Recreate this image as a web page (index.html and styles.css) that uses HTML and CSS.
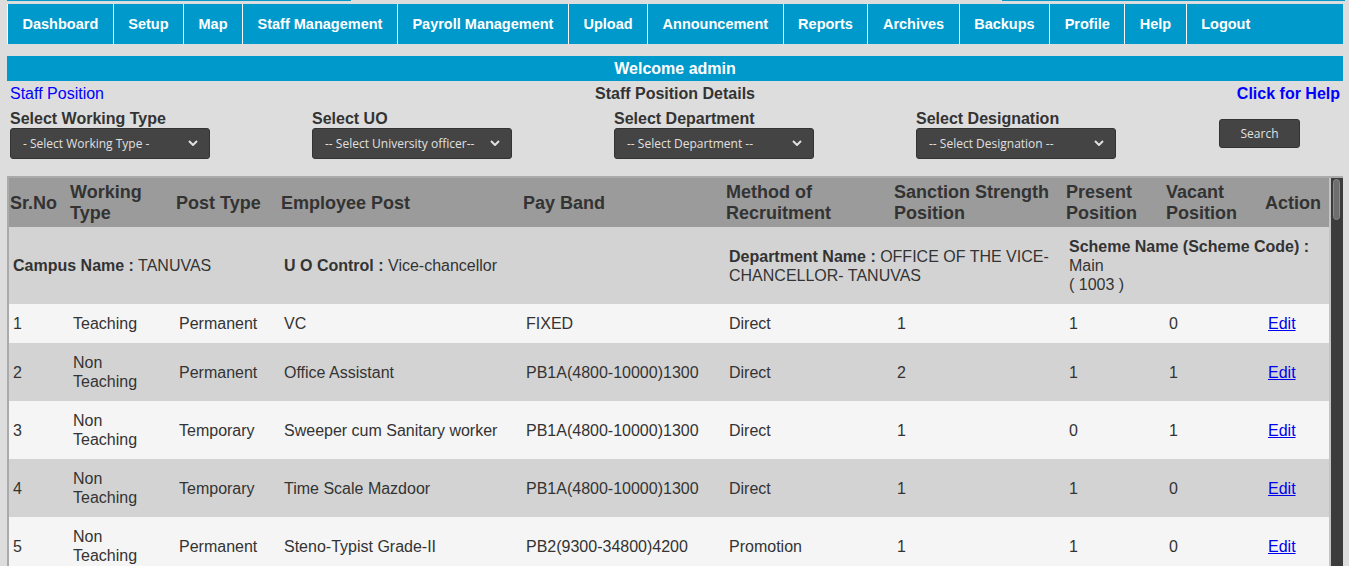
FILE: index.html
```html
<!DOCTYPE html>
<html lang="en">
<head>
<meta charset="utf-8">
<title>Staff Position Details</title>
<link rel="stylesheet" href="styles.css">
</head>
<body>
<div class="page">
  <div class="top-strip"></div>
  <ul class="nav">
    <li class="nav-item"><a href="#">Dashboard</a></li>
    <li class="nav-item"><a href="#">Setup</a></li>
    <li class="nav-item"><a href="#">Map</a></li>
    <li class="nav-item"><a href="#">Staff Management</a></li>
    <li class="nav-item"><a href="#">Payroll Management</a></li>
    <li class="nav-item"><a href="#">Upload</a></li>
    <li class="nav-item"><a href="#">Announcement</a></li>
    <li class="nav-item"><a href="#">Reports</a></li>
    <li class="nav-item"><a href="#">Archives</a></li>
    <li class="nav-item"><a href="#">Backups</a></li>
    <li class="nav-item"><a href="#">Profile</a></li>
    <li class="nav-item"><a href="#">Help</a></li>
    <li class="nav-item"><a href="#">Logout</a></li>
  </ul>

  <div class="welcome">Welcome admin</div>

  <div class="title-row">
    <a class="crumb" href="#">Staff Position</a>
    <div class="page-title">Staff Position Details</div>
    <a class="help-link" href="#">Click for Help</a>
  </div>

  <div class="filters">
    <div class="filter">
      <div class="filter-label">Select Working Type</div>
      <div class="select-wrap">
        <select class="select"><option>- Select Working Type -</option></select>
        <svg class="chevron" viewBox="0 0 10 6" width="10" height="6"><path d="M1 1 L5 5 L9 1" fill="none" stroke="#e0e0e0" stroke-width="2"/></svg>
      </div>
    </div>
    <div class="filter">
      <div class="filter-label">Select UO</div>
      <div class="select-wrap">
        <select class="select"><option>-- Select University officer--</option></select>
        <svg class="chevron" viewBox="0 0 10 6" width="10" height="6"><path d="M1 1 L5 5 L9 1" fill="none" stroke="#e0e0e0" stroke-width="2"/></svg>
      </div>
    </div>
    <div class="filter">
      <div class="filter-label">Select Department</div>
      <div class="select-wrap">
        <select class="select"><option>-- Select Department --</option></select>
        <svg class="chevron" viewBox="0 0 10 6" width="10" height="6"><path d="M1 1 L5 5 L9 1" fill="none" stroke="#e0e0e0" stroke-width="2"/></svg>
      </div>
    </div>
    <div class="filter">
      <div class="filter-label">Select Designation</div>
      <div class="select-wrap">
        <select class="select"><option>-- Select Designation --</option></select>
        <svg class="chevron" viewBox="0 0 10 6" width="10" height="6"><path d="M1 1 L5 5 L9 1" fill="none" stroke="#e0e0e0" stroke-width="2"/></svg>
      </div>
    </div>
    <div class="filter-action">
      <button class="search-btn" type="button">Search</button>
    </div>
  </div>

  <div class="table-wrap">
    <div class="table-scroll">
      <table class="staff-table">
        <colgroup>
          <col class="c-sr"><col class="c-wt"><col class="c-pt"><col class="c-ep"><col class="c-pb">
          <col class="c-mr"><col class="c-ss"><col class="c-pp"><col class="c-vp"><col class="c-ac">
        </colgroup>
        <thead>
          <tr>
            <th>Sr.No</th>
            <th>Working Type</th>
            <th>Post Type</th>
            <th>Employee Post</th>
            <th>Pay Band</th>
            <th>Method of Recruitment</th>
            <th>Sanction Strength Position</th>
            <th>Present Position</th>
            <th>Vacant Position</th>
            <th>Action</th>
          </tr>
        </thead>
        <tbody>
          <tr class="group-row">
            <td colspan="3"><b>Campus Name :</b> TANUVAS</td>
            <td colspan="2"><b>U O Control :</b> Vice-chancellor</td>
            <td colspan="2"><b>Department Name :</b> OFFICE OF THE VICE-CHANCELLOR- TANUVAS</td>
            <td colspan="3"><b>Scheme Name (Scheme Code) :</b><br>Main<br>( 1003 )</td>
          </tr>
          <tr class="row-light">
            <td>1</td><td>Teaching</td><td>Permanent</td><td>VC</td><td>FIXED</td><td>Direct</td><td>1</td><td>1</td><td>0</td><td><a class="edit" href="#">Edit</a></td>
          </tr>
          <tr class="row-dark">
            <td>2</td><td>Non Teaching</td><td>Permanent</td><td>Office Assistant</td><td>PB1A(4800-10000)1300</td><td>Direct</td><td>2</td><td>1</td><td>1</td><td><a class="edit" href="#">Edit</a></td>
          </tr>
          <tr class="row-light">
            <td>3</td><td>Non Teaching</td><td>Temporary</td><td>Sweeper cum Sanitary worker</td><td>PB1A(4800-10000)1300</td><td>Direct</td><td>1</td><td>0</td><td>1</td><td><a class="edit" href="#">Edit</a></td>
          </tr>
          <tr class="row-dark">
            <td>4</td><td>Non Teaching</td><td>Temporary</td><td>Time Scale Mazdoor</td><td>PB1A(4800-10000)1300</td><td>Direct</td><td>1</td><td>1</td><td>0</td><td><a class="edit" href="#">Edit</a></td>
          </tr>
          <tr class="row-light">
            <td>5</td><td>Non Teaching</td><td>Permanent</td><td>Steno-Typist Grade-II</td><td>PB2(9300-34800)4200</td><td>Promotion</td><td>1</td><td>1</td><td>0</td><td><a class="edit" href="#">Edit</a></td>
          </tr>
          <tr class="row-dark">
            <td>6</td><td>Non Teaching</td><td>Permanent</td><td>Driver</td><td>PB1A(5200-20200)2400</td><td>Direct</td><td>1</td><td>1</td><td>0</td><td><a class="edit" href="#">Edit</a></td>
          </tr>
          <tr class="row-light">
            <td>7</td><td>Non Teaching</td><td>Permanent</td><td>Personal Assistant</td><td>PB2(9300-34800)4600</td><td>Promotion</td><td>1</td><td>1</td><td>0</td><td><a class="edit" href="#">Edit</a></td>
          </tr>
        </tbody>
      </table>
    </div>
    <div class="scrollbar"><div class="scrollbar-thumb"></div></div>
  </div>
</div>
</body>
</html>
```
FILE: styles.css
```css
* { box-sizing: border-box; }

html, body {
  margin: 0;
  padding: 0;
}

body {
  background: #dddddd;
  font-family: "Liberation Sans", Arial, sans-serif;
  color: #333333;
  overflow: hidden;
}

.page {
  width: 1336px;
  margin-left: 7px;
}

.top-strip {
  height: 1px;
  width: 1338px;
  background: linear-gradient(to right, #0099cc 0, #0099cc 344px, transparent 344px, transparent 995px, #0099cc 995px);
}

.nav {
  list-style: none;
  margin: 3px 0 0 0;
  padding: 0;
  display: flex;
  height: 40px;
  background: #0099cc;
  border-left: 1px solid #ffffff;
}

.nav-item a {
  display: block;
  padding: 0 14.5px;
  line-height: 40px;
  font-size: 14.5px;
  font-weight: bold;
  color: #ffffff;
  text-decoration: none;
  border-right: 1px solid #ffffff;
}

.nav-item:last-child a {
  border-right: none;
}

.welcome {
  margin-top: 12px;
  height: 25px;
  line-height: 25px;
  background: #0099cc;
  color: #ffffff;
  font-size: 16px;
  font-weight: bold;
  text-align: center;
}

.title-row {
  margin-top: 3px;
  padding: 0 3px;
  display: grid;
  grid-template-columns: 1fr auto 1fr;
  font-size: 16px;
  line-height: 19px;
}

.crumb {
  color: #0000ff;
  text-decoration: none;
}

.page-title {
  font-weight: bold;
  color: #333333;
}

.help-link {
  justify-self: end;
  color: #0000ff;
  font-weight: bold;
  text-decoration: none;
}

.filters {
  margin-top: 7px;
  padding-left: 3px;
  display: grid;
  grid-template-columns: 302px 302px 302px 302px auto;
  align-items: start;
}

.filter-label {
  font-size: 16px;
  line-height: 18px;
  font-weight: bold;
  color: #333333;
}

.select-wrap {
  position: relative;
  width: 200px;
  height: 31px;
}

.select {
  -webkit-appearance: none;
  appearance: none;
  width: 200px;
  height: 31px;
  margin: 0;
  padding: 0 30px 0 12px;
  background: #444444;
  border: 1px solid #333333;
  border-radius: 3px;
  color: #e0e0e0;
  font-family: "Open Sans", "Noto Sans", sans-serif;
  font-size: 12px;
  outline: none;
}

.chevron {
  position: absolute;
  left: 178px;
  top: 12px;
  pointer-events: none;
}

.filter-action {
  padding-left: 1px;
  padding-top: 9px;
}

.search-btn {
  width: 81px;
  height: 29px;
  margin: 0;
  padding: 0;
  background: #444444;
  border: 1px solid #333333;
  border-radius: 3px;
  color: #e0e0e0;
  font-family: "Open Sans", "Noto Sans", sans-serif;
  font-size: 12px;
}

.table-wrap {
  margin-top: 17px;
  height: 390px;
  display: flex;
  border-left: 2px solid #aaaaaa;
  border-top: 2px solid #aaaaaa;
  background: #c4c4c4;
}

.table-scroll {
  flex: 1;
  overflow: hidden;
}

.scrollbar {
  width: 12px;
  flex: none;
  background: #3c3c3c;
  padding: 1px 3px 0 2px;
}

.scrollbar-thumb {
  height: 41px;
  border-radius: 4px;
  background: #6e6e6e;
  border: 1px solid #8a8a8a;
}

.staff-table {
  width: 1320px;
  table-layout: fixed;
  border-collapse: collapse;
  border-spacing: 0;
}

.c-sr { width: 60px; }
.c-wt { width: 106px; }
.c-pt { width: 105px; }
.c-ep { width: 242px; }
.c-pb { width: 203px; }
.c-mr { width: 168px; }
.c-ss { width: 172px; }
.c-pp { width: 100px; }
.c-vp { width: 99px; }
.c-ac { width: 65px; }

.staff-table th {
  background: #9b9b9b;
  color: #333333;
  font-size: 18px;
  line-height: 21px;
  font-weight: bold;
  text-align: left;
  vertical-align: middle;
  padding: 4px 1px 3px 1px;
}

.staff-table td {
  font-size: 16px;
  line-height: 19px;
  padding: 10px 8px 10px 4px;
  vertical-align: middle;
  color: #333333;
}

.group-row td {
  background: #d3d3d3;
}

.row-light td {
  background: #f5f5f5;
}

.row-dark td {
  background: #d3d3d3;
}

.edit {
  color: #0000ee;
  text-decoration: underline;
}
```
